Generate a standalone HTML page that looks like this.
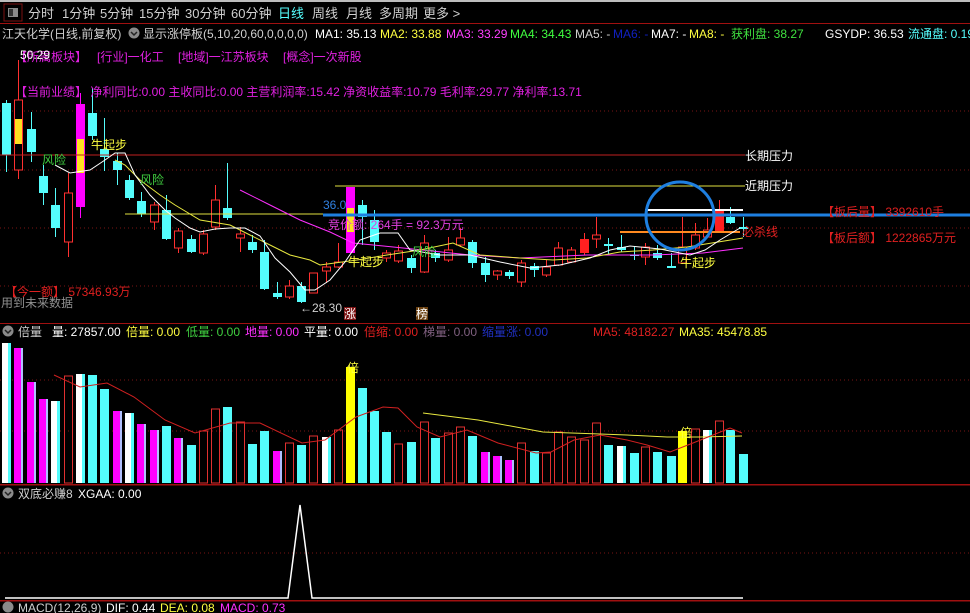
<!DOCTYPE html>
<html><head><meta charset="utf-8">
<style>
html,body{margin:0;padding:0;background:#000;width:970px;height:613px;overflow:hidden}
svg{display:block}
text{font-family:"Liberation Sans","Noto Sans CJK SC",sans-serif;font-size:12px}
</style></head><body>
<svg id="s" width="970" height="613" viewBox="0 0 970 613" xmlns="http://www.w3.org/2000/svg">
<rect width="970" height="613" fill="#000"/>
<rect x="0" y="0" width="970" height="2" fill="#bdbdbd"/>
<rect x="4" y="4" width="18" height="17" fill="none" stroke="#7a1010"/>
<rect x="8" y="8" width="10" height="9" fill="#8a8a8a"/>
<rect x="9" y="9" width="4" height="7" fill="#333"/>
<g font-size="13" fill="#d0d0d0">
<text x="28" y="18" style="font-size:13px">分时</text>
<text x="62" y="18" style="font-size:13px">1分钟</text>
<text x="100" y="18" style="font-size:13px">5分钟</text>
<text x="139" y="18" style="font-size:13px">15分钟</text>
<text x="185" y="18" style="font-size:13px">30分钟</text>
<text x="231" y="18" style="font-size:13px">60分钟</text>
<text x="278" y="18" style="font-size:13px" fill="#55ffff">日线</text>
<text x="312" y="18" style="font-size:13px">周线</text>
<text x="346" y="18" style="font-size:13px">月线</text>
<text x="379" y="18" style="font-size:13px">多周期</text>
<text x="423" y="18" style="font-size:13px">更多 &gt;</text>
</g>
<rect x="0" y="23" width="970" height="1" fill="#a01010"/>
<!-- info line -->
<text x="2" y="38" fill="#d0d0d0">江天化学(日线,前复权)</text>
<circle cx="134" cy="33" r="5.5" fill="#8a8a8a"/><path d="M131 32 L134 35 L137 32" stroke="#222" stroke-width="1.5" fill="none"/>
<text x="143" y="38" fill="#d0d0d0">显示涨停板(5,10,20,60,0,0,0,0)</text>
<text x="315" y="38" fill="#fff">MA1: 35.13</text>
<text x="380" y="38" fill="#ffff40">MA2: 33.88</text>
<text x="446" y="38" fill="#ff40ff">MA3: 33.29</text>
<text x="510" y="38" fill="#40ff40">MA4: 34.43</text>
<text x="575" y="38" fill="#d0d0d0">MA5: -</text>
<text x="613" y="38" fill="#1020c0">MA6: -</text>
<text x="651" y="38" fill="#fff">MA7: -</text>
<text x="689" y="38" fill="#ffff40">MA8: -</text>
<text x="731" y="38" fill="#40e040">获利盘: 38.27</text>
<text x="825" y="38" fill="#fff">GSYDP: 36.53</text>
<text x="908" y="38" fill="#55ffff">流通盘: 0.19</text>
<!-- grid -->
<g stroke="#7a1515" stroke-dasharray="1,3">
<line x1="0" y1="111" x2="970" y2="111"/><line x1="0" y1="170" x2="970" y2="170"/>
<line x1="0" y1="228" x2="970" y2="228"/><line x1="0" y1="286" x2="970" y2="286"/>
<line x1="0" y1="380" x2="970" y2="380"/><line x1="0" y1="431" x2="970" y2="431"/>
<line x1="0" y1="553" x2="970" y2="553"/>
</g>
<g id="cand"></g>
<!-- pressure lines -->
<line x1="0" y1="155" x2="745" y2="155" stroke="#c02020"/>
<line x1="335" y1="186" x2="745" y2="186" stroke="#e0e040"/>
<line x1="125" y1="214" x2="345" y2="214" stroke="#e0e040"/>
<line x1="645" y1="210" x2="743" y2="210" stroke="#fff" stroke-width="2"/>
<line x1="620" y1="232" x2="740" y2="232" stroke="#ff8a20" stroke-width="2"/>
<polyline fill="none" stroke="#ff30ff" points="240,190 270,205 300,220 330,232 353,243 403,248 470,255 520,258 587,255 653,255 703,253 743,248"/>
<polyline fill="none" stroke="#e8e840" points="115,160 125,165 140,180 160,195 175,205 200,220 230,225 250,235 270,245 290,255 310,260 320,265 357,260 387,255 420,250 453,243 480,255 520,258 553,260 587,258 620,252 653,250 687,247 743,238"/>
<polyline fill="none" stroke="#fff" points="55,165 70,173 90,170 105,160 115,153 125,153 135,175 150,195 165,210 175,218 190,228 200,232 215,229 230,228 245,228 260,236 275,258 290,272 305,290 315,290 330,280 345,262 360,240 380,233 398,233 410,250 440,255 470,255 500,262 530,268 560,265 590,258 610,250 630,246 660,249 690,255 705,250 720,240 740,228"/>
<line x1="323" y1="215" x2="970" y2="215" stroke="#1e7fe0" stroke-width="3"/>
<circle cx="680" cy="216" r="34" fill="none" stroke="#1e7fe0" stroke-width="3"/>
<!-- main labels -->
<text x="15" y="61" fill="#e020e0">【所属板块】</text>
<text x="20" y="59" fill="#fff">50.29</text>
<text x="97" y="61" fill="#e020e0">[行业]一化工</text>
<text x="178" y="61" fill="#e020e0">[地域]一江苏板块</text>
<text x="283" y="61" fill="#e020e0">[概念]一次新股</text>
<text x="15" y="96" fill="#e020e0">【当前业绩】 净利同比:0.00 主收同比:0.00 主营利润率:15.42 净资收益率:10.79 毛利率:29.77 净利率:13.71</text>
<text x="42" y="164" fill="#40d040">风险</text>
<text x="91" y="149" fill="#ffff40">牛起步</text>
<text x="140" y="184" fill="#40d040">风险</text>
<text x="5" y="296" fill="#e02020">【今一额】 57346.93万</text>
<text x="1" y="307" fill="#909090">用到未来数据</text>
<text x="300" y="312" fill="#d0d0d0">←28.30</text>
<rect x="344" y="307" width="12" height="13" fill="#7a1010"/><text x="344" y="318" fill="#fff">涨</text>
<rect x="416" y="307" width="12" height="13" fill="#6a4010"/><text x="416" y="318" fill="#fff">榜</text>
<text x="323" y="209" fill="#3080e0">36.0</text>
<text x="328" y="229" fill="#e040e0">竞价额: 264手 = 92.3万元</text>
<text x="348" y="266" fill="#ffff40">牛起步</text>
<text x="412" y="256" fill="#40d040">风险</text>
<text x="680" y="267" fill="#ffff40">牛起步</text>
<text x="742" y="236" fill="#e02020">必杀线</text>
<text x="745" y="160" fill="#fff">长期压力</text>
<text x="745" y="190" fill="#fff">近期压力</text>
<text x="822" y="216" fill="#e02020">【板后量】 3392610手</text>
<text x="822" y="242" fill="#e02020">【板后额】 1222865万元</text>
<rect x="0" y="323" width="970" height="1" fill="#a01010"/>
<!-- volume header -->
<circle cx="8" cy="331" r="5.5" fill="#8a8a8a"/><path d="M5 330 L8 333 L11 330" stroke="#222" stroke-width="1.5" fill="none"/>
<text x="18" y="336" fill="#d0d0d0">倍量</text>
<text x="52" y="336" fill="#fff">量: 27857.00</text>
<text x="126" y="336" fill="#ffff40">倍量: 0.00</text>
<text x="186" y="336" fill="#40d040">低量: 0.00</text>
<text x="245" y="336" fill="#ff30ff">地量: 0.00</text>
<text x="304" y="336" fill="#fff">平量: 0.00</text>
<text x="364" y="336" fill="#e02020">倍缩: 0.00</text>
<text x="423" y="336" fill="#806080">梯量: 0.00</text>
<text x="482" y="336" fill="#2030c0">缩量涨: 0.00</text>
<text x="593" y="336" fill="#e02020">MA5: 48182.27</text>
<text x="679" y="336" fill="#ffff40">MA35: 45478.85</text>
<g id="vol"></g>
<polyline fill="none" stroke="#e8e840" points="423,413 478,420 543,432 600,434 627,435 667,437 700,437 742,436"/>
<polyline fill="none" stroke="#d02020" points="54,375 80,387 107,383 134,397 165,420 195,433 230,423 260,423 302,443 325,440 356,417 383,407 398,408 417,427 440,437 467,430 498,443 536,453 551,452 574,440 600,435 627,440 647,445 670,452 693,443 713,435 730,428 742,433"/>
<text x="347" y="372" fill="#ffff40">倍</text>
<text x="680" y="437" fill="#ffff40">倍</text>
<rect x="0" y="484" width="970" height="1.5" fill="#a01010"/>
<circle cx="8" cy="493" r="5.5" fill="#8a8a8a"/><path d="M5 492 L8 495 L11 492" stroke="#222" stroke-width="1.5" fill="none"/>
<text x="18" y="498" fill="#d0d0d0">双底必赚8</text>
<text x="78" y="498" fill="#fff">XGAA: 0.00</text>
<polyline fill="none" stroke="#fff" stroke-width="1.5" points="5,598 288,598 300,505 312,598 743,598"/>
<rect x="0" y="600" width="970" height="1.5" fill="#a01010"/>
<circle cx="8" cy="607" r="5.5" fill="#8a8a8a"/>
<text x="18" y="612" fill="#d0d0d0">MACD(12,26,9)</text>
<text x="106" y="612" fill="#fff">DIF: 0.44</text>
<text x="160" y="612" fill="#ffff40">DEA: 0.08</text>
<text x="220" y="612" fill="#ff30ff">MACD: 0.73</text>
</svg>
<script>
var C=[[2,100,103,155,172,'c'],[14,60,100,170,179,'r',119,144],[27,112,129,152,162,'c'],[39,165,176,193,205,'c'],[51,188,205,228,237,'c'],[64,173,193,242,257,'r'],[76,93,104,207,218,'m',139,173],[88,88,113,136,140,'c'],[100,118,149,157,171,'c'],[113,153,161,170,185,'c'],[125,175,180,198,200,'c'],[137,192,201,214,217,'c'],[150,202,205,222,230,'r'],[162,195,210,239,240,'c'],[174,228,231,248,253,'r'],[187,235,239,252,253,'c'],[199,230,234,253,255,'r'],[211,185,200,227,230,'r'],[223,163,208,218,220,'c'],[236,227,234,238,252,'r'],[248,235,242,250,253,'c'],[260,240,252,289,290,'c'],[273,282,293,297,299,'c'],[285,280,286,297,299,'r'],[297,282,286,302,303,'c'],[309,273,273,293,293,'r'],[322,262,267,271,283,'r'],[334,243,262,267,268,'r'],[346,187,187,253,253,'m',208,232],[358,200,205,217,245,'c'],[370,210,220,242,250,'c'],[382,250,253,258,262,'r'],[394,245,251,261,263,'r'],[407,255,258,268,273,'c'],[420,235,243,272,273,'r'],[431,250,253,258,262,'c'],[444,237,250,260,262,'r'],[456,228,238,245,247,'r'],[468,240,242,263,268,'c'],[481,257,263,275,282,'c'],[493,270,271,275,280,'r'],[505,270,272,276,279,'c'],[517,260,263,282,287,'r'],[530,263,266,270,277,'c'],[542,260,267,275,277,'r'],[554,242,248,265,266,'r'],[567,247,250,262,263,'r'],[580,233,239,253,255,'R'],[592,217,235,239,248,'r'],[604,238,244,246,255,'c'],[617,235,247,250,252,'c'],[630,247,255,256,260,'c'],[641,243,247,257,265,'r'],[653,245,253,258,260,'c'],[667,253,266,268,268,'c'],[678,217,247,263,264,'r'],[691,223,235,248,250,'r'],[703,218,230,237,238,'r'],[715,200,211,232,233,'R'],[726,207,217,223,224,'c'],[739,217,227,229,237,'c']];
var V=[343,348,382,399,401,376,374,375,389,411,413,424,430,426,438,445,431,409,407,422,444,431,451,443,445,436,437,430,367,388,411,432,444,442,422,438,433,427,436,452,456,460,443,451,453,432,437,440,423,445,446,453,447,452,456,431,429,430,421,430,454];
var T="wmmmwhwccmwmmcmchhchccmhchwhyccchchchhcmmmhchhhhhcwchccyhwhcc";
var s='',i,c,col;
for(i=0;i<C.length;i++){c=C[i];
 col=c[5]=='c'?'#54fcfc':(c[5]=='m'?'#ff00ff':'#ff3030');
 s+='<line x1="'+(c[0]+4.5)+'" y1="'+c[1]+'" x2="'+(c[0]+4.5)+'" y2="'+c[4]+'" stroke="'+col+'"/>';
 var h=Math.max(1,c[3]-c[2]);
 if(c[5]=='r') s+='<rect x="'+(c[0]+0.5)+'" y="'+c[2]+'" width="8" height="'+h+'" fill="#000" stroke="#ff3030"/>';
 else s+='<rect x="'+c[0]+'" y="'+c[2]+'" width="9" height="'+h+'" fill="'+(c[5]=='R'?'#ff2020':col)+'"/>';
 if(c[6]) s+='<rect x="'+(c[0]+1)+'" y="'+c[6]+'" width="7" height="'+(c[7]-c[6])+'" fill="#ffe020"/>';
}
document.getElementById('cand').innerHTML=s;s='';
for(i=0;i<V.length;i++){var x=C[i][0],t=T[i],y=V[i],hh=483-y;
 if(t=='h') s+='<rect x="'+(x+0.5)+'" y="'+y+'" width="8" height="'+hh+'" fill="none" stroke="#e03030"/>';
 else{col={w:'#ffffff',m:'#ff00ff',c:'#54fcfc',y:'#ffff00'}[t];
 s+='<rect x="'+x+'" y="'+y+'" width="9" height="'+hh+'" fill="'+col+'"/>';
 if(t=='w') s+='<rect x="'+(x+6)+'" y="'+y+'" width="3" height="'+hh+'" fill="#54fcfc"/>';
 if(t=='m') s+='<rect x="'+(x+7)+'" y="'+y+'" width="2" height="'+hh+'" fill="#b0c0ff"/>';}
}
document.getElementById('vol').innerHTML=s;
</script>
</body></html>
